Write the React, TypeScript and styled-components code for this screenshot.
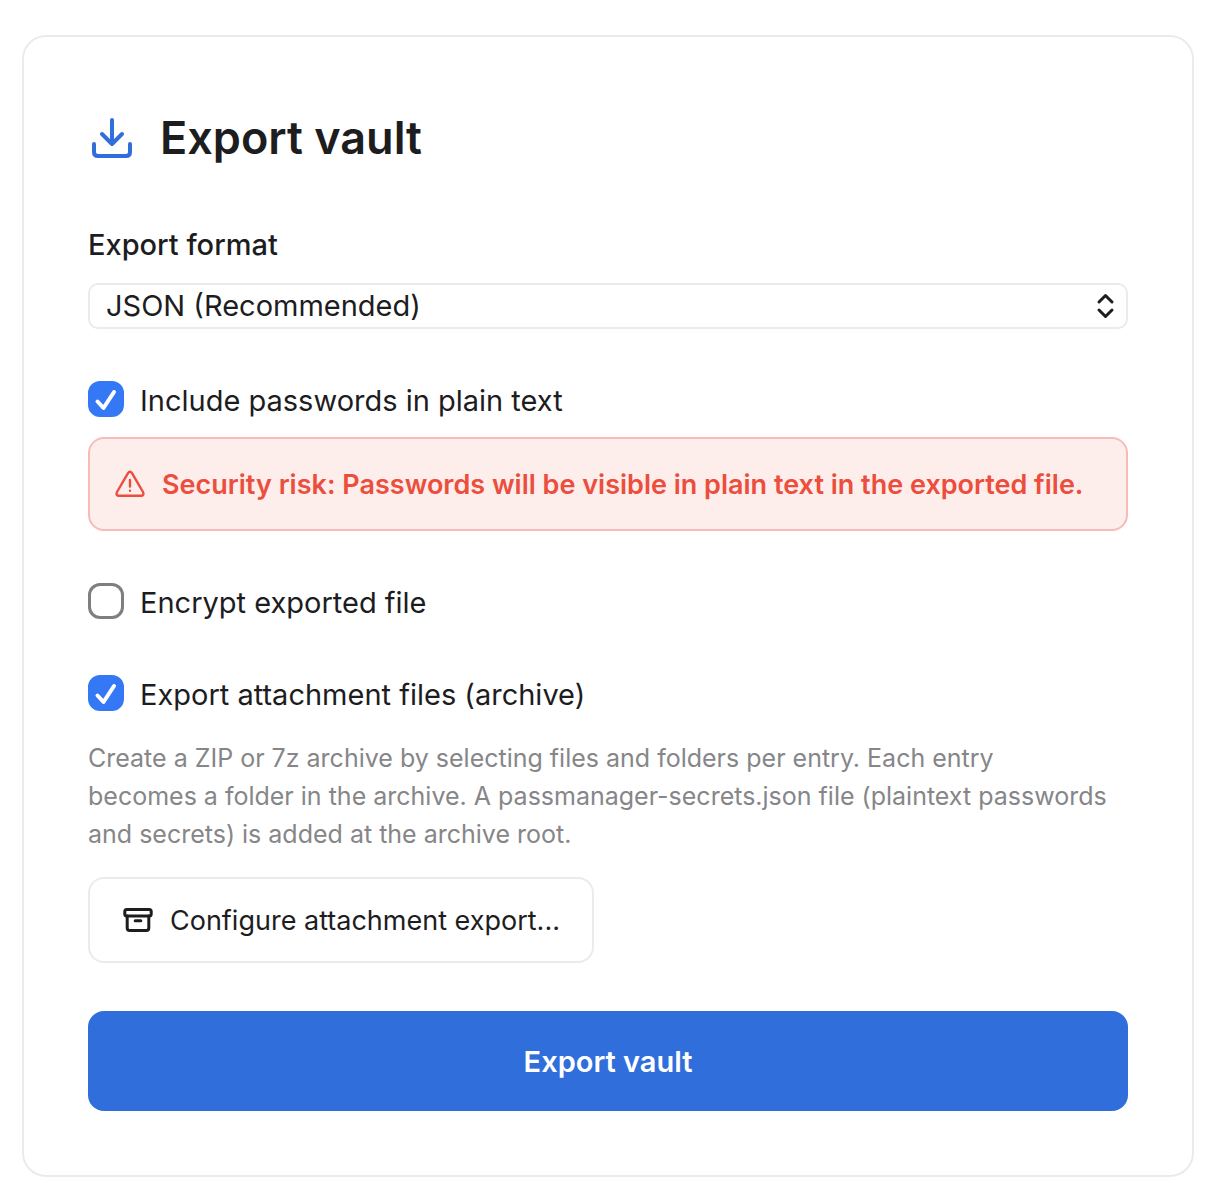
import React from "react";
import styled, { createGlobalStyle } from "styled-components";

const Global = createGlobalStyle`
  *, *::before, *::after { box-sizing: border-box; }
  body { margin: 0; background: #fff; color: #1d1d1f; font-family: Inter, "Liberation Sans", sans-serif; }
`;

const Page = styled.main`
  padding: 35px 26px 17px 22px;
`;

const Card = styled.form`
  display: flex;
  flex-direction: column;
  padding: 64px;
  border: 2px solid #ebebeb;
  border-radius: 24px;
`;

const Header = styled.header`
  display: flex;
  align-items: center;
  gap: 24px;
  margin-bottom: 48px;
`;

const Title = styled.h1`
  margin: 0;
  font-size: 45px;
  line-height: 74px;
  font-weight: 600;
`;

const Field = styled.div`
  display: flex;
  flex-direction: column;
  gap: 16px;
  margin-bottom: 52px;
`;

const FieldLabel = styled.label`
  font-size: 29px;
  line-height: 44px;
  font-weight: 500;
`;

const SelectWrap = styled.div`
  display: grid;
  align-items: center;
  > * { grid-area: 1 / 1; }
  > svg { justify-self: end; margin-right: 12px; pointer-events: none; }
`;

const Select = styled.select`
  appearance: none;
  width: 100%;
  height: 46px;
  padding: 0 48px 0 16px;
  border: 2px solid #ebebeb;
  border-radius: 10px;
  background: #fff;
  color: inherit;
  font: 400 29px/40px Inter, "Liberation Sans", sans-serif;
`;

const CheckLabel = styled.label`
  display: flex;
  align-items: flex-start;
  gap: 16px;
  font-size: 29px;
  line-height: 40px;
`;

const CheckWrap = styled.span`
  display: grid;
  > * { grid-area: 1 / 1; }
  > svg { pointer-events: none; visibility: hidden; }
  > input:checked + svg { visibility: visible; }
`;

const Checkbox = styled.input`
  appearance: none;
  width: 36px;
  height: 36px;
  margin: 0;
  border: 3px solid #7f7f7f;
  border-radius: 12px;
  background: #fff;
  &:checked { border-color: #3478f6; background: #3478f6; }
`;

const Alert = styled.div`
  display: flex;
  align-items: center;
  gap: 16px;
  margin: 16px 0 52px;
  padding: 25px 24px 23px;
  border: 2px solid #f8bbb6;
  border-radius: 16px;
  background: #fdedeb;
  color: #ec4e3d;
  font-size: 27px;
  line-height: 42px;
  font-weight: 600;
`;

const Section = styled.section`
  display: flex;
  flex-direction: column;
  align-items: flex-start;
  margin-top: 52px;
`;

const Description = styled.p`
  margin: 24px 0;
  color: #868688;
  font-size: 25px;
  line-height: 38px;
`;

const SecondaryButton = styled.button`
  display: flex;
  align-items: center;
  gap: 16px;
  padding: 21px 32px 19px;
  border: 2px solid #ebebeb;
  border-radius: 16px;
  background: #fff;
  color: inherit;
  font: 400 27px/42px Inter, "Liberation Sans", sans-serif;
`;

const PrimaryButton = styled.button`
  margin-top: 48px;
  padding: 29px 28px 27px;
  border: 0;
  border-radius: 16px;
  background: #2f6edb;
  color: #fff;
  font: 600 29px/44px Inter, "Liberation Sans", sans-serif;
`;

function Check({ id, label, defaultChecked = false }: { id: string; label: string; defaultChecked?: boolean }) {
  return (
    <CheckLabel htmlFor={id}>
      <CheckWrap>
        <Checkbox id={id} type="checkbox" defaultChecked={defaultChecked} />
        <svg width="36" height="36" fill="none" stroke="#fff" strokeWidth="4" strokeLinecap="round" strokeLinejoin="round" aria-hidden="true">
          <path d="M9.5 20.500 15.500 27 26 11" />
        </svg>
      </CheckWrap>
      {label}
    </CheckLabel>
  );
}

export default function App() {
  return (
    <>
      <Global />
      <Page>
        <Card>
          <Header>
            <svg width="48" height="48" viewBox="0 0 48 48" fill="none" stroke="#2f6edb" strokeWidth="4" strokeLinecap="round" strokeLinejoin="round" aria-hidden="true">
              <path d="M24 6v23M14 20l10 10 10-10M6 30v8q0 4 4 4h28q4 0 4-4v-8" />
            </svg>
            <Title>Export vault</Title>
          </Header>
          <Field>
            <FieldLabel htmlFor="format">Export format</FieldLabel>
            <SelectWrap>
              <Select id="format"><option>JSON (Recommended)</option></Select>
              <svg width="20" height="28" fill="none" stroke="#1d1d1f" strokeWidth="3" strokeLinecap="round" strokeLinejoin="round" aria-hidden="true">
                <path d="m3 10 6.500-6.500 6.500 6.500M3 18l6.500 6.500 6.500-6.500" />
              </svg>
            </SelectWrap>
          </Field>
          <Check id="plain" label="Include passwords in plain text" defaultChecked />
          <Alert role="alert">
            <svg width="32" height="32" viewBox="0 0 32 32" fill="none" stroke="currentColor" strokeWidth="2.4" strokeLinecap="round" strokeLinejoin="round" aria-hidden="true">
              <path d="M14 4.200Q16 1.200 18 4.200L29 23Q30.500 26.800 26.800 26.800H5.200Q1.500 26.800 3 23ZM16 11v6.500M16 21.700v.1" />
            </svg>
            Security risk: Passwords will be visible in plain text in the exported file.
          </Alert>
          <Check id="encrypt" label="Encrypt exported file" />
          <Section>
            <Check id="attachments" label="Export attachment files (archive)" defaultChecked />
            <Description>
              Create a ZIP or 7z archive by selecting files and folders per entry. Each entry<br />
              becomes a folder in the archive. A passmanager-secrets.json file (plaintext passwords and secrets) is added at the archive root.
            </Description>
            <SecondaryButton type="button">
              <svg width="32" height="32" viewBox="0 0 32 32" fill="none" stroke="currentColor" strokeWidth="3" strokeLinejoin="round" strokeLinecap="round" aria-hidden="true">
                <rect x="2.800" y="4.500" width="26.400" height="6.500" rx="2" />
                <path d="M5.200 11v12q0 2.500 2.500 2.500h16.600q2.500 0 2.500-2.500V11M13.200 15.700h5.600" />
              </svg>
              Configure attachment export...
            </SecondaryButton>
          </Section>
          <PrimaryButton type="button">Export vault</PrimaryButton>
        </Card>
      </Page>
    </>
  );
}
